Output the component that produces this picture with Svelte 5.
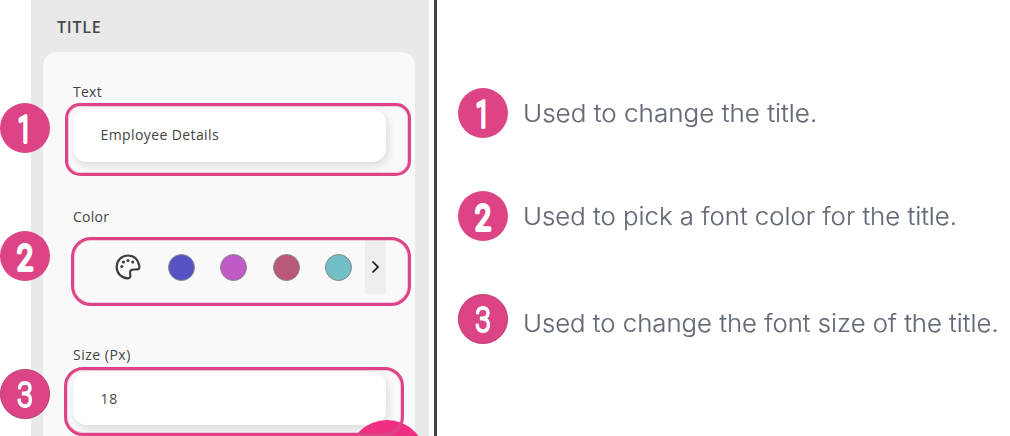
<script>
  const swatches = ['#5753c4', '#bf5ac6', '#b95877', '#72bfc6'];
  const notes = [
    { n: 1, text: 'Used to change the title.', stretch: 1.085 },
    { n: 2, text: 'Used to pick a font color for the title.', stretch: 1.074 },
    { n: 3, text: 'Used to change the font size of the title.', stretch: 1.072 }
  ];
</script>

{#snippet badge(n)}
  <svg class="badge" width="50" height="50" viewBox="0 0 50 50">
    <circle cx="25" cy="25" r={n === 3 ? 24.6 : 25} fill="#dc4485" stroke={n === 3 ? '#a93266' : 'none'} stroke-width="0.8" />
    <text class="digit" class:outlined={n === 3} transform="translate({n === 1 ? 24.6 : 25} {n === 3 ? 38 : 38.5}) scale({n === 1 ? 0.68 : 0.8} 1)">{n}</text>
  </svg>
{/snippet}

<main>
  <section class="panel">
    <h2>TITLE</h2>
    <div class="card">
      <div class="field">
        <span class="label l-text">Text</span>
        <div class="input"><span class="name">Employee Details</span></div>
      </div>
      <div class="field color">
        <span class="label l-color">Color</span>
        <div class="picker">
          <svg class="palette" width="28" height="28" viewBox="0 0 28 28" fill="none">
            <path d="M14 2.500C7.600 2.500 2.700 7.500 2.700 14c0 6.300 4.800 11.300 11 11.300 2 0 2.900-1 2.600-3.100-.3-2-.7-3.600.3-4.700 1.100-1.200 3-1 5.200-1 2.800 0 4-.7 3.600-3.300C24.600 6.900 20.300 2.500 14 2.500Z" stroke="#3c3c3c" stroke-width="2.200" />
            <g fill="#3c3c3c"><circle cx="7.8" cy="13.6" r="1.5" /><circle cx="9.5" cy="9.1" r="1.5" /><circle cx="14" cy="7.5" r="1.5" /><circle cx="18.700" cy="9.100" r="1.5" /></g>
          </svg>
          {#each swatches as color}
            <span class="swatch" style="background:{color}"></span>
          {/each}
          <span class="next">
            <svg width="9" height="14" viewBox="0 0 9 14" fill="none"><path d="M1.500 1.500 7 7l-5.500 5.500" stroke="#111" stroke-width="1.700" /></svg>
          </span>
        </div>
      </div>
      <div class="field size">
        <span class="label l-size">Size (Px)</span>
        <div class="input"><span class="num">18</span></div>
      </div>
    </div>
    <div class="fab"></div>
    <div class="ring r1"></div>
    <div class="ring r2"></div>
    <div class="ring r3"></div>
    <div class="mark m1">{@render badge(1)}</div>
    <div class="mark m2">{@render badge(2)}</div>
    <div class="mark m3">{@render badge(3)}</div>
  </section>
  <div class="divider"></div>
  <section class="notes">
    {#each notes as note}
      <div class="note">
        {@render badge(note.n)}
        <p class:low={note.n === 3} style="transform:scaleX({note.stretch})">{note.text}</p>
      </div>
    {/each}
  </section>
</main>

<style>
  :global(body) { margin: 0; background: #fff; overflow: hidden; }
  main { display: flex; width: 1010px; height: 436px; overflow: hidden; background: #fff; }
  .panel { position: relative; box-sizing: border-box; width: 398px; height: 436px; margin-left: 31px; padding: 0 14px 0 12px; background: #e9e9e9; color: #434343; font-family: "Open Sans", sans-serif; flex: none; }
  h2 { margin: 0; height: 52px; padding-left: 14px; font: 600 16px/55px "Open Sans", sans-serif; letter-spacing: .8px; color: #484848; box-sizing: border-box; }
  .card { box-sizing: border-box; height: 400px; padding: 30px 29px 0 30px; border-radius: 14px; background: #f9f9f9; }
  .label { display: block; height: 20px; font-size: 14px; line-height: 20px; }
  .l-text, .l-color { letter-spacing: .25px; }
  .l-size { letter-spacing: .5px; }
  .name { letter-spacing: .4px; margin-top: -3px; }
  .num { letter-spacing: .8px; margin-top: -1px; }
  .field { display: flex; flex-direction: column; }
  .field .input { margin-top: 7px; }
  .input { display: flex; align-items: center; box-sizing: border-box; height: 53px; padding-left: 27.500px; border-radius: 14px; background: #fff; box-shadow: 2px 4px 10px rgba(0, 0, 0, .12); font-size: 14px; }
  .color { margin-top: 45px; }
  .picker { display: flex; align-items: center; height: 54px; margin-top: 13px; padding-left: 41px; }
  .palette { margin-right: 26px; flex: none; }
  .swatch { box-sizing: border-box; width: 27px; height: 27px; margin-right: 25.300px; border: 1px solid #878787; border-radius: 50%; flex: none; }
  .swatch:nth-of-type(4) { margin-right: 0; }
  .next { display: flex; align-items: center; justify-content: center; width: 21px; height: 54px; margin-left: auto; border-radius: 2px; background: #eee; flex: none; }
  .size { margin-top: 51px; }
  .ring { position: absolute; box-sizing: border-box; border: 3px solid #dc4485; box-shadow: inset 0 0 0 1px rgba(220, 68, 133, .25); }
  .r1 { left: 34px; top: 103px; width: 346px; height: 73px; border-radius: 15px; }
  .r2 { left: 40px; top: 237px; width: 340px; height: 69px; border-radius: 20px; }
  .r3 { left: 33px; top: 367px; width: 340px; height: 69px; border-radius: 19px; }
  .fab { position: absolute; left: 317px; top: 420px; width: 78px; height: 78px; border-radius: 50%; background: #ef2f83; }
  .mark { position: absolute; left: -31px; }
  .m1 { top: 103px; }
  .m2 { top: 231px; }
  .m3 { top: 369px; }
  .badge { display: block; flex: none; }
  .digit { font: 300 36px "Roboto", sans-serif; text-anchor: middle; fill: #fff; stroke: #fff; stroke-width: 3.800; stroke-linejoin: round; }
  .outlined { stroke-width: 2.200; filter: drop-shadow(0 0 .7px #8a2450); }
  .divider { width: 3px; height: 436px; margin-left: 5px; background: #414243; flex: none; }
  .notes { display: flex; flex-direction: column; gap: 53px; padding: 88px 0 0 21px; }
  .note { display: flex; align-items: center; height: 50px; gap: 15px; }
  .note p { margin: 2px 0 0; font: 300 24px/30px "Inter", sans-serif; color: #646a77; -webkit-text-stroke: .15px #646a77; white-space: nowrap; transform-origin: 0 50%; }
  .note p.low { margin-top: 10px; }
</style>
